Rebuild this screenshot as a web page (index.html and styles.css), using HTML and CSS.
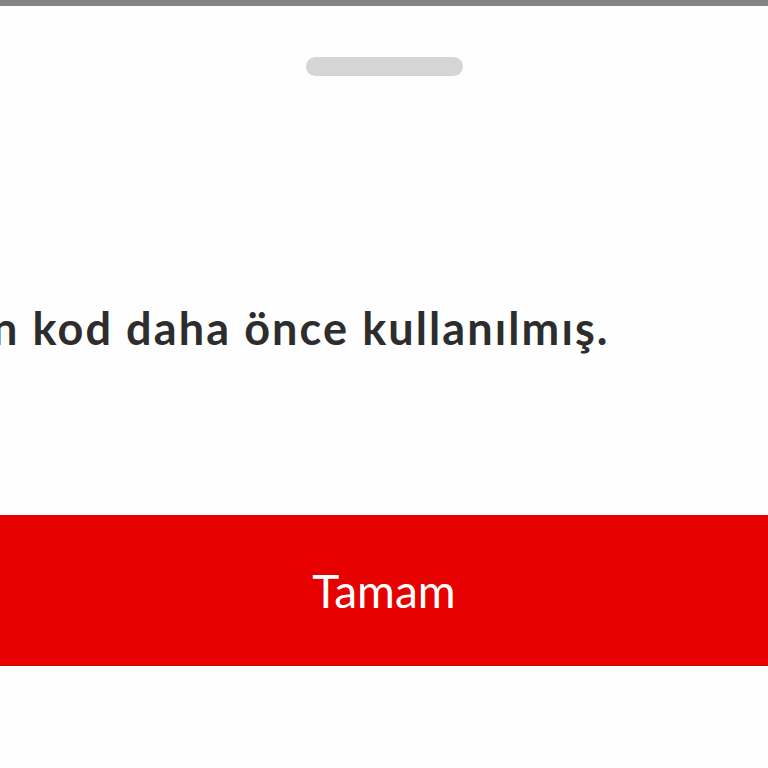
FILE: index.html
```html
<!DOCTYPE html>
<html lang="tr">
<head>
<meta charset="utf-8">
<link rel="stylesheet" href="styles.css">
</head>
<body>
<div class="topbar"></div>
<div class="sheet">
  <div class="handle"></div>
  <p class="message">n kod daha önce kullanılmış.</p>
  <button class="ok">Tamam</button>
</div>
</body>
</html>
```
FILE: styles.css
```css
html, body {
  margin: 0;
  padding: 0;
  width: 768px;
  height: 768px;
  overflow: hidden;
  background: #fefefe;
  font-family: Lato, "Open Sans", sans-serif;
}
.topbar {
  height: 6px;
  background: #858388;
}
.sheet {
  display: flex;
  flex-direction: column;
  align-items: center;
}
.handle {
  margin-top: 51px;
  width: 157px;
  height: 19px;
  border-radius: 10px;
  background: #d5d5d5;
}
.message {
  align-self: flex-start;
  margin: 226px 0 0 -8px;
  font-size: 45px;
  font-weight: 700;
  letter-spacing: 2.1px;
  word-spacing: 0;
  color: #2d2d2d;
  line-height: 52px;
  white-space: nowrap;
}
.ok {
  margin-top: 161px;
  width: 100%;
  height: 151px;
  border: 0;
  background: #e60000;
  color: #fff;
  font-family: Lato, "Open Sans", sans-serif;
  font-size: 46px;
  font-weight: 400;
  padding: 0;
}
```
